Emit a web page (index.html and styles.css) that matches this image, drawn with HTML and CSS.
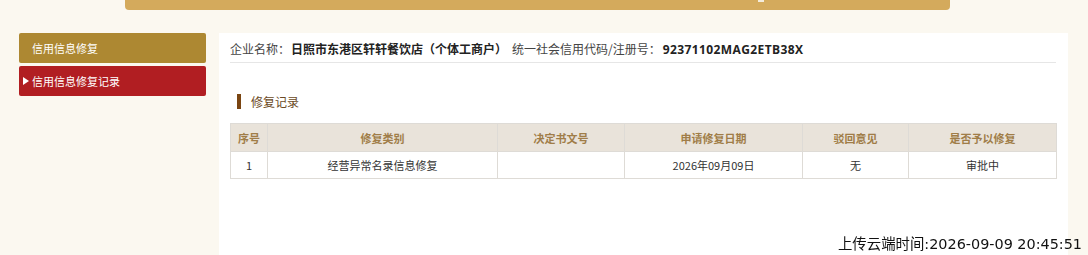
FILE: index.html
```html
<!DOCTYPE html>
<html lang="zh-CN">
<head>
<meta charset="utf-8">
<title>信用信息修复记录</title>
<link rel="stylesheet" href="styles.css">
</head>
<body>
<div class="topbar"><span class="topbar-mark"></span></div>
<div class="layout">
  <aside class="sidebar">
    <div class="nav-item nav-gold">信用信息修复</div>
    <div class="nav-item nav-red"><span class="tri"></span>信用信息修复记录</div>
  </aside>
  <main class="panel">
    <div class="info">
      <span class="label">企业名称：</span><b class="val name">日照市东港区轩轩餐饮店（个体工商户）</b><span class="label">统一社会信用代码/注册号：</span><b class="val num">92371102MAG2ETB38X</b>
    </div>
    <div class="title"><span class="title-bar"></span>修复记录</div>
    <table class="records">
      <colgroup>
        <col class="c1"><col class="c2"><col class="c3"><col class="c4"><col class="c5"><col class="c6">
      </colgroup>
      <thead>
        <tr><th>序号</th><th>修复类别</th><th>决定书文号</th><th>申请修复日期</th><th>驳回意见</th><th>是否予以修复</th></tr>
      </thead>
      <tbody>
        <tr><td>1</td><td>经营异常名录信息修复</td><td></td><td>2026年09月09日</td><td>无</td><td>审批中</td></tr>
      </tbody>
    </table>
  </main>
</div>
<div class="stamp">上传云端时间:2026-09-09 20:45:51</div>
</body>
</html>
```
FILE: styles.css
```css
html, body {
  margin: 0;
  padding: 0;
}
body {
  background: #fbf8f0;
  font-family: "Noto Sans CJK SC", "Noto Sans", sans-serif;
  color: #333;
  height: 255px;
  overflow: hidden;
}
.topbar {
  margin-left: 125px;
  width: 825px;
  height: 10px;
  background: #d4aa5c;
  border-radius: 0 0 4px 4px;
  position: relative;
}
.topbar-mark {
  position: absolute;
  left: 633px;
  top: 0;
  width: 6px;
  height: 2px;
  background: #f4ecdc;
}
.layout {
  display: flex;
  margin-top: 23px;
  padding-left: 19px;
  gap: 13px;
}
.sidebar {
  width: 187px;
  display: flex;
  flex-direction: column;
  gap: 3px;
}
.nav-item {
  height: 30px;
  line-height: 30px;
  font-size: 11px;
  color: #fff;
  border-radius: 2px;
  display: flex;
  align-items: center;
}
.nav-gold {
  background: #ad8832;
  padding-left: 13px;
}
.nav-red {
  background: #b11e22;
  padding-left: 4px;
}
.tri {
  width: 0;
  height: 0;
  border-top: 4px solid transparent;
  border-bottom: 4px solid transparent;
  border-left: 6px solid #fff;
  margin-right: 3px;
}
.panel {
  width: 826px;
  height: 222px;
  background: #fff;
  padding: 0 12px 0 11px;
}
.info {
  height: 29px;
  line-height: 32px;
  font-size: 12px;
  border-bottom: 1px solid #e6e6e6;
  white-space: nowrap;
}
.label {
  color: #444;
}
.val {
  color: #222;
  font-weight: bold;
}
.name {
  margin-left: 1px;
  margin-right: 5px;
}
.num {
  font-family: "Open Sans", "Noto Sans", sans-serif;
  font-weight: 700;
  letter-spacing: 0.4px;
  margin-left: 2px;
}
.title {
  display: flex;
  align-items: center;
  margin-top: 30px;
  padding-left: 7px;
  font-size: 12px;
  color: #6b4a25;
  height: 16px;
}
.title-bar {
  width: 4px;
  height: 15px;
  background: #7a4512;
  margin-right: 10px;
}
.records {
  margin-top: 14px;
  width: 827px;
  border-collapse: collapse;
  table-layout: fixed;
  font-size: 11px;
}
.c1 { width: 37px; }
.c2 { width: 230px; }
.c3 { width: 127px; }
.c4 { width: 178px; }
.c5 { width: 106px; }
.c6 { width: 148px; }
.records th, .records td {
  border: 1px solid #dedbd6;
  text-align: center;
  padding: 0;
}
.records th {
  background: #e9e3da;
  color: #a07d48;
  font-weight: bold;
  height: 27px;
}
.records td {
  color: #333;
  height: 26px;
}
.stamp {
  position: fixed;
  right: 6px;
  bottom: 2px;
  font-family: "DejaVu Sans", "Noto Sans CJK SC", sans-serif;
  font-size: 14.4px;
  color: #111;
  white-space: nowrap;
}
```
